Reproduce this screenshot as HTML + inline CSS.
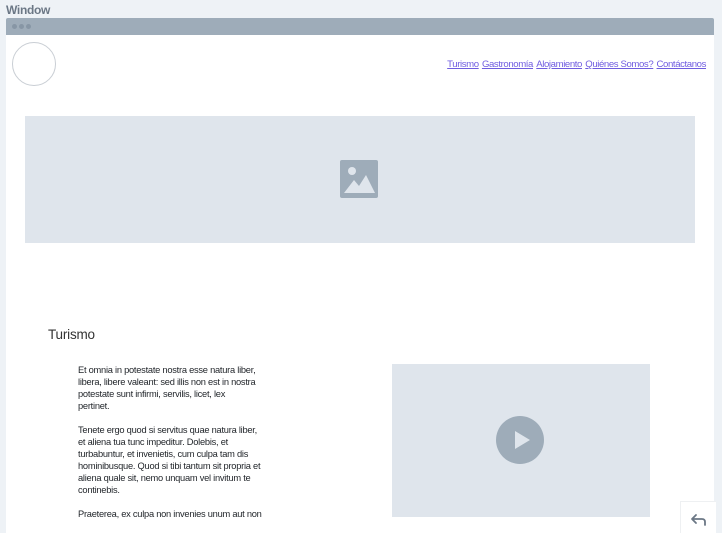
<!DOCTYPE html>
<html><head><meta charset="utf-8"><style>
*{margin:0;padding:0;box-sizing:border-box}
html,body{width:722px;height:533px;overflow:hidden}
body{background:#eef2f6;font-family:"Liberation Sans",sans-serif;position:relative}
.title{position:absolute;left:6px;top:3px;font-size:12px;font-weight:bold;color:#6b7785;letter-spacing:-0.3px}
.bar{position:absolute;left:6px;top:18px;width:708px;height:17px;background:#9eacb9;border-radius:2px 2px 0 0}
.dot{position:absolute;top:6px;width:5px;height:5px;border-radius:50%;background:#8796a5}
.win{position:absolute;left:6px;top:35px;width:708px;height:498px;background:#fff}
.logo{position:absolute;left:6px;top:7px;width:44px;height:44px;border:1px solid #c9ced4;border-radius:50%}
.nav{position:absolute;right:8px;top:24px;font-size:9.6px;letter-spacing:-0.4px;white-space:nowrap}
.nav a{color:#6f5ce0;text-decoration:underline;margin-left:1px}
.hero{position:absolute;left:19px;top:81px;width:670px;height:127px;background:#dfe5ec}
h2{position:absolute;left:42px;top:292px;font-size:13.5px;font-weight:normal;color:#333;letter-spacing:-0.2px}
.txt{position:absolute;left:72px;top:329px;font-size:9.3px;line-height:12px;color:#1f2328;letter-spacing:-0.25px;white-space:nowrap}
.txt p{margin-bottom:12px}
.vid{position:absolute;left:386px;top:329px;width:258px;height:153px;background:#dfe5ec}
.play{position:absolute;left:104px;top:52px;width:48px;height:48px;border-radius:50%;background:#9eacb9}
.back{position:absolute;left:680px;top:501px;width:36px;height:32px;background:#fff;border:1px solid #eef0f2;border-right:none;border-bottom:none}
</style></head><body>
<div class="title">Window</div>
<div class="bar"><div class="dot" style="left:6px"></div><div class="dot" style="left:13px"></div><div class="dot" style="left:20px"></div></div>
<div class="win">
<div class="logo"></div>
<div class="nav"><a>Turismo</a> <a>Gastronomía</a> <a>Alojamiento</a> <a>Quiénes Somos?</a> <a>Contáctanos</a></div>
<div class="hero"><svg style="position:absolute;left:315px;top:44px" width="38" height="38" viewBox="0 0 38 38"><rect width="38" height="38" rx="2" fill="#9eacb9"/><circle cx="12" cy="11" r="4" fill="#dfe5ec"/><path d="M4 33 L14 20 L19 26 L26 15 L35 33 Z" fill="#dfe5ec"/></svg></div>
<h2>Turismo</h2>
<div class="txt">
<p>Et omnia in potestate nostra esse natura liber,<br>libera, libere valeant: sed illis non est in nostra<br>potestate sunt infirmi, servilis, licet, lex<br>pertinet.</p>
<p>Tenete ergo quod si servitus quae natura liber,<br>et aliena tua tunc impeditur. Dolebis, et<br>turbabuntur, et invenietis, cum culpa tam dis<br>hominibusque. Quod si tibi tantum sit propria et<br>aliena quale sit, nemo unquam vel invitum te<br>continebis.</p>
<p>Praeterea, ex culpa non invenies unum aut non</p>
</div>
<div class="vid"><div class="play"><svg width="48" height="48" viewBox="0 0 48 48"><path d="M19 15 L34 24 L19 33 Z" fill="#dfe5ec"/></svg></div></div>
</div>
<div class="back"><svg width="36" height="32" viewBox="0 0 36 32"><path d="M11 17 L15 13 M11 17 L15 21 M11 17 H21 Q24 17 24 20 V23" stroke="#6b7785" stroke-width="1.8" fill="none" stroke-linecap="round"/></svg></div>
</body></html>
